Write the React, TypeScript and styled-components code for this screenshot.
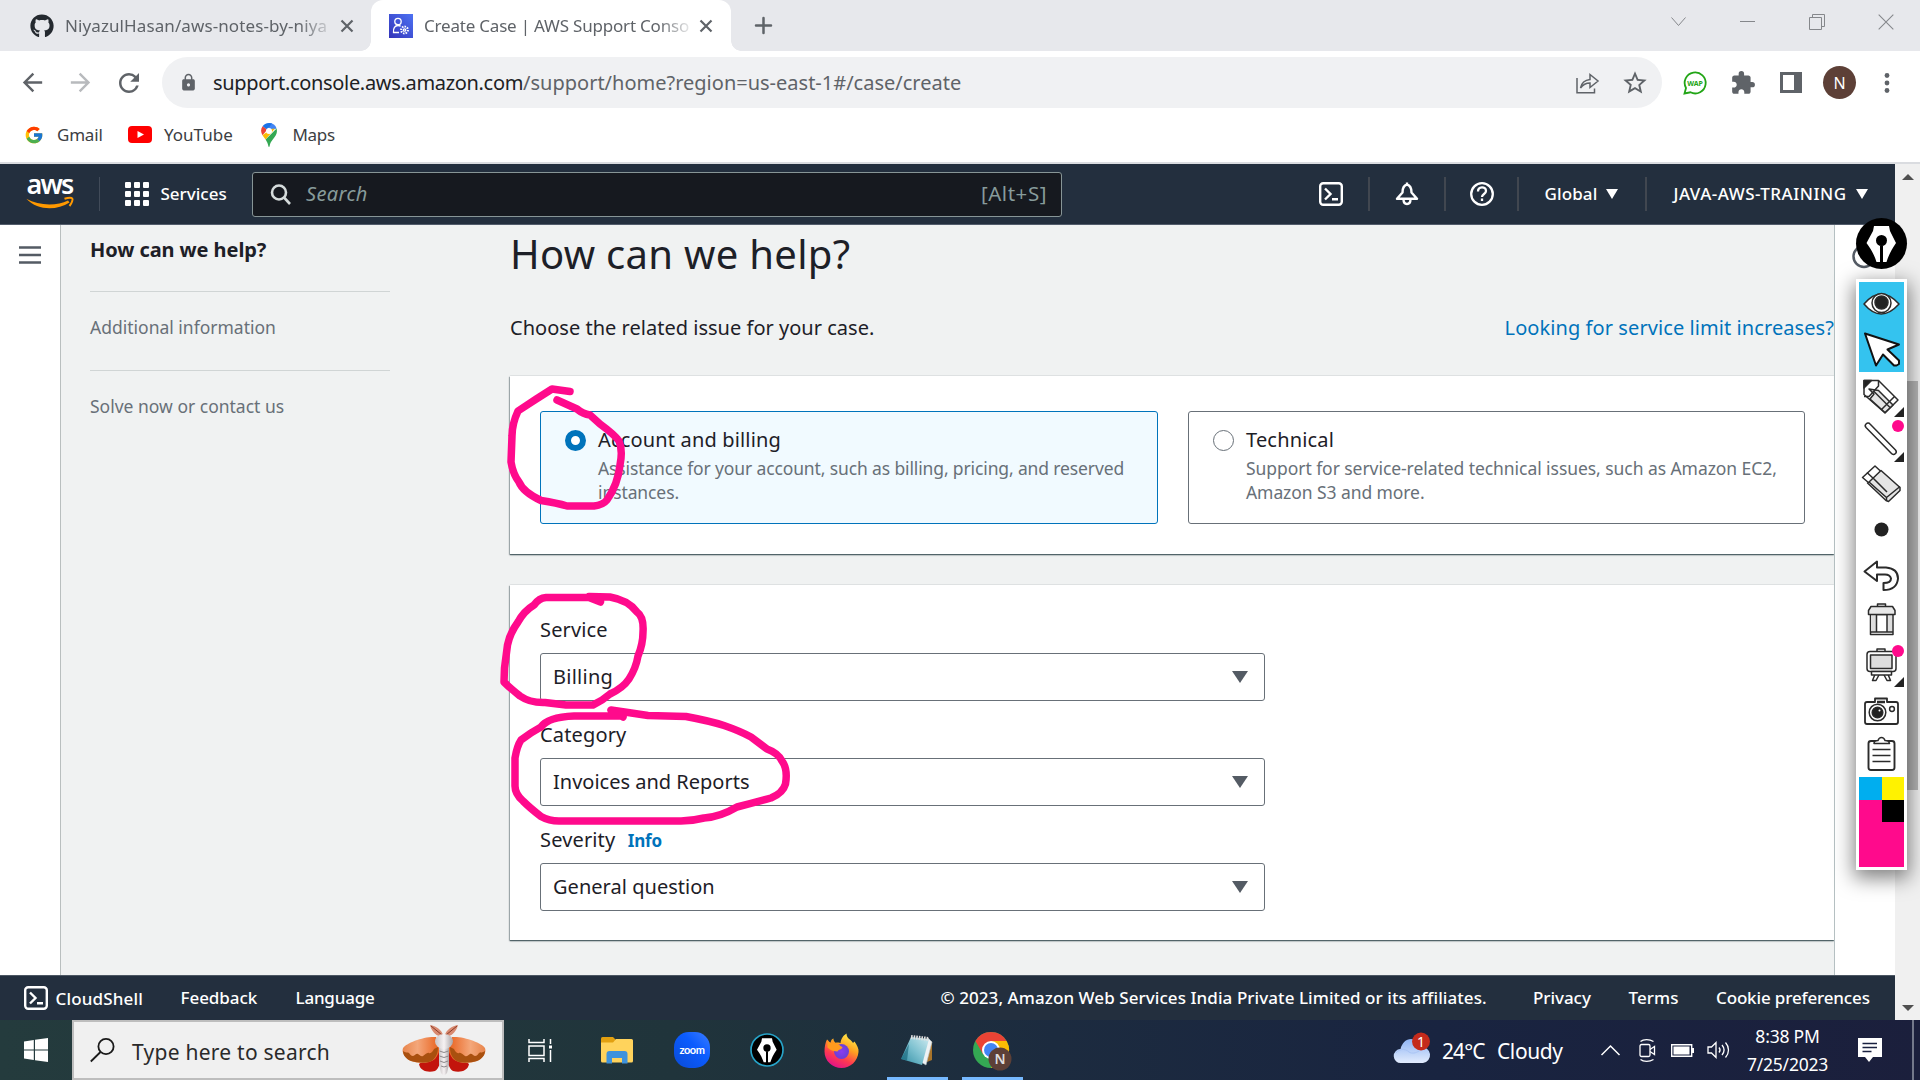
import React from 'react';
import styled, { createGlobalStyle, css } from 'styled-components';
import { FaGithub } from 'react-icons/fa';
import { FcGoogle } from 'react-icons/fc';
import { MdExtension, MdRefresh, MdLock, MdStarBorder, MdArrowBack, MdArrowForward } from 'react-icons/md';

const GlobalStyle = createGlobalStyle`
  *, *::before, *::after { box-sizing: border-box; }
  body { margin: 0; overflow: hidden; font-family: "Noto Sans", "Open Sans", sans-serif; }
  svg { display: block; flex: none; overflow: visible; }
`;

const PINK = '#ff0a8c';

const Screen = styled.div`
  position: relative;
  display: flex;
  flex-direction: column;
  width: 1920px;
  height: 1080px;
  overflow: hidden;
  background: #fff;
`;

const Text = styled.span<{ $size?: number; $ls?: number; $color?: string; $weight?: number; $italic?: boolean }>`
  display: block;
  white-space: nowrap;
  font-size: ${(p) => p.$size ?? 17}px;
  letter-spacing: ${(p) => p.$ls ?? 0}px;
  font-weight: ${(p) => p.$weight ?? 400};
  font-style: ${(p) => (p.$italic ? 'italic' : 'normal')};
  color: ${(p) => p.$color ?? 'inherit'};
`;

/* ---------- browser tabs ---------- */

const TabStrip = styled.div`
  display: flex;
  height: 51px;
  background: #e7e8ec;
  color: #5f6368;
`;

const Tab = styled.div<{ $active?: boolean }>`
  position: relative;
  display: flex;
  align-items: center;
  width: ${(p) => (p.$active ? 360 : 371)}px;
  padding-left: ${(p) => (p.$active ? 18 : 30)}px;
  border-radius: 12px 12px 0 0;
  ${(p) =>
    p.$active &&
    css`
      background: #fff;
      &::before,
      &::after {
        content: '';
        position: absolute;
        bottom: 0;
        width: 10px;
        height: 10px;
      }
      &::before {
        left: -10px;
        background: radial-gradient(circle at 0 0, transparent 9.5px, #fff 10px);
      }
      &::after {
        right: -10px;
        background: radial-gradient(circle at 100% 0, transparent 9.5px, #fff 10px);
      }
    `}
`;

const TabTitle = styled.div`
  width: 268px;
  margin: 0 8px 0 11px;
  line-height: 30px;
  mask-image: linear-gradient(90deg, #000 87%, transparent 101%);
`;

const NewTab = styled.div`
  display: flex;
  align-items: center;
  margin-left: 24px;
`;

const WindowControls = styled.div`
  display: grid;
  grid-template-columns: 69px 69px 69px 69px;
  align-items: center;
  justify-items: center;
  height: 43px;
  margin-left: auto;
  width: 276px;
  color: #85878b;
`;

/* ---------- toolbar ---------- */

const Toolbar = styled.div`
  display: flex;
  align-items: center;
  height: 63px;
  color: #5f6368;
`;

const NavButtons = styled.div`
  display: grid;
  grid-template-columns: 48px 48px 48px;
  justify-items: center;
  width: 162px;
  padding-left: 8.5px;
`;

const Omnibox = styled.div`
  display: flex;
  align-items: center;
  width: 1500px;
  height: 51px;
  padding: 0 13px 0 17px;
  border-radius: 26px;
  background: #f0f1f3;
`;

const Url = styled.div`
  display: flex;
  flex: 1;
  margin-left: 15px;
`;

const OmniActions = styled.div`
  display: flex;
  align-items: center;
  gap: 22px;
`;

const Extensions = styled.div`
  display: grid;
  grid-template-columns: 48px 48px 48px 49px 46px;
  align-items: center;
  justify-items: center;
  padding-left: 9px;
`;

const Avatar = styled.div`
  display: flex;
  align-items: center;
  justify-content: center;
  width: 33px;
  height: 33px;
  border-radius: 50%;
  background: #5d4037;
  color: #fff;
`;

const Bookmarks = styled.div`
  display: grid;
  grid-template-columns: 33px 71px 36px 96.5px 32px 60px;
  align-items: center;
  height: 50px;
  padding: 0 0 7px 24px;
  border-bottom: 2px solid #dadce0;
  color: #3c4043;
`;

/* ---------- page ---------- */

const Viewport = styled.div`
  display: flex;
  height: 856px;
`;

const Page = styled.div`
  display: flex;
  flex-direction: column;
  width: 1895px;
`;

const ScrollTrack = styled.div`
  display: flex;
  flex-direction: column;
  align-items: center;
  width: 25px;
  background: #f0f0f0;
`;

const ScrollThumb = styled.div`
  width: 21px;
  height: 409px;
  margin-top: 201px;
  background: #b5b5b5;
`;

const ArrowUp = styled.div`
  margin-top: 10px;
  border: 6px solid transparent;
  border-top: 0;
  border-bottom: 6px solid #505050;
`;

const ArrowDown = styled.div`
  margin: auto 0 9px;
  border: 6px solid transparent;
  border-bottom: 0;
  border-top: 6px solid #505050;
`;

const AwsHeader = styled.header`
  display: flex;
  align-items: center;
  height: 61px;
  border-bottom: 1px solid #525c6b;
  background: #232f3e;
  color: #fff;
`;

const AwsLogo = styled.div`
  display: flex;
  flex-direction: column;
  align-items: center;
  width: 99px;
  height: 34px;
`;

const LogoWord = styled.span`
  height: 21px;
  font-size: 27px;
  font-weight: 600;
  line-height: 14px;
  letter-spacing: -1.8px;
`;

const Services = styled.div`
  display: flex;
  align-items: center;
  gap: 11.5px;
  width: 153px;
  height: 34px;
  padding-left: 25px;
  border-left: 1px solid #414b59;
`;

const HeaderText = styled(Text)`
  padding-bottom: 2px;
`;

const SearchBox = styled.div`
  display: flex;
  align-items: center;
  width: 810px;
  height: 45px;
  padding: 0 14px 0 17px;
  border: 1px solid #879596;
  border-radius: 3px;
  background: #16191f;
  color: #879b9b;
`;

const SearchHint = styled.div`
  flex: 1;
  padding-left: 15px;
`;

const HeaderTools = styled.div`
  display: grid;
  grid-template-columns: 76px 76px 73px 128px 248px;
  margin-left: auto;
`;

const HeaderTool = styled.div<{ $shift?: number }>`
  display: flex;
  align-items: center;
  justify-content: center;
  gap: 9px;
  height: 34px;
  padding-right: ${(p) => p.$shift ?? 0}px;
  &:not(:last-child) {
    border-right: 2px solid #414750;
  }
`;

const Caret = styled.span<{ $w: number; $h: number; $color: string }>`
  border: ${(p) => p.$w / 2}px solid transparent;
  border-top: ${(p) => p.$h}px solid ${(p) => p.$color};
  border-bottom: 0;
`;

const Body = styled.div`
  display: flex;
  flex: 1;
  background: #f0f2f2;
  color: #1d2027;
`;

const LeftRail = styled.div`
  width: 61px;
  padding: 21px 0 0 19px;
  border-right: 1px solid #b9bfbf;
  background: #fff;
`;

const RightRail = styled.div`
  width: 61px;
  padding: 21px 0 0 17px;
  border-left: 1px solid #b5c0c2;
  background: #fff;
`;

const Steps = styled.nav`
  width: 300px;
  margin: -10px 120px 0 29px;
`;

const Step = styled.div<{ $current?: boolean }>`
  margin-top: 20px;
  padding-bottom: ${(p) => (p.$current ? 26 : 28)}px;
  line-height: 30px;
  &:not(:last-child) {
    border-bottom: 1px solid #d0d5d5;
  }
`;

const Content = styled.main`
  width: 1324px;
  padding-top: 4px;
`;

const Title = styled.h1`
  margin: 0 0 34px;
  font-size: 40px;
  font-weight: 400;
  line-height: 50px;
  letter-spacing: 0.3px;
`;

const IntroRow = styled.div`
  display: flex;
  justify-content: space-between;
  height: 30px;
  margin-bottom: 33px;
  line-height: 30px;
`;

const Panel = styled.section<{ $h: number; $top: number }>`
  height: ${(p) => p.$h}px;
  padding: ${(p) => p.$top}px 29px 0 30px;
  margin-bottom: 31px;
  background: #fff;
  box-shadow: 0 1px 1px rgba(0, 28, 36, 0.45), -1px 1px 1px rgba(0, 28, 36, 0.22), 0 1px 2px rgba(0, 28, 36, 0.3), 0 -1px 0 rgba(0, 28, 36, 0.05);
  clip-path: inset(-1px 0 -5px -3px);
`;

const Cards = styled.div`
  display: grid;
  grid-template-columns: 618px 617px;
  gap: 30px;
`;

const Card = styled.div<{ $selected?: boolean }>`
  display: flex;
  gap: 12px;
  height: 113px;
  padding: 13px 20px 0 24px;
  border: 1px solid ${(p) => (p.$selected ? '#0073bb' : '#687078')};
  border-radius: 3px;
  background: ${(p) => (p.$selected ? '#f1faff' : '#fff')};
`;

const Radio = styled.span<{ $on?: boolean }>`
  flex: none;
  width: 21px;
  height: 21px;
  margin-top: 5px;
  border: ${(p) => (p.$on ? '6px solid #0073bb' : '1.5px solid #687078')};
  border-radius: 50%;
  background: #fff;
`;

const CardText = styled.div`
  display: flex;
  flex-direction: column;
  line-height: 24px;
`;

const CardLabel = styled(Text)`
  margin-bottom: 1px;
  line-height: 30px;
`;

const Field = styled.div`
  margin-bottom: 19px;
`;

const FieldLabel = styled.div`
  display: flex;
  gap: 12.5px;
  height: 30px;
  margin-bottom: 8px;
  line-height: 30px;
`;

const InfoLink = styled(Text)`
  line-height: 32px;
`;

const Select = styled.div`
  display: flex;
  align-items: center;
  justify-content: space-between;
  width: 725px;
  height: 48px;
  padding: 0 16px 0 12px;
  border: 1px solid #687078;
  border-radius: 3px;
`;

const SelectValue = styled(Text)`
  padding-bottom: 1.5px;
`;

const Footer = styled.footer`
  display: grid;
  grid-template-columns: 156.500px 115px 645px 592.5px 95.5px 87.500px 1fr;
  align-items: center;
  height: 45px;
  padding-left: 24px;
  border-top: 1px solid #4c5763;
  background: #232f3e;
  color: #fff;
`;

const FooterShell = styled.div`
  display: flex;
  align-items: center;
  gap: 7.5px;
`;

/* ---------- annotation layer ---------- */

const InkLayer = styled.svg`
  position: absolute;
  left: 0;
  top: 0;
  fill: none;
  stroke: ${PINK};
  stroke-width: 7.5;
  stroke-linecap: round;
  stroke-linejoin: round;
`;

const PenBadge = styled.div`
  position: absolute;
  left: 1856px;
  top: 218px;
`;

const PenPalette = styled.div`
  position: absolute;
  left: 1856px;
  top: 279px;
  width: 51px;
  padding: 3px;
  background: #fff;
  box-shadow: 0 6px 20px 2px rgba(0, 0, 0, 0.5);
`;

const Tool = styled.div<{ $active?: boolean; $more?: boolean }>`
  position: relative;
  display: flex;
  align-items: center;
  justify-content: center;
  height: 45px;
  background: ${(p) => (p.$active ? '#34c3ef' : '#fff')};
  & + & {
    box-shadow: ${(p) => (p.$active ? '0 -1px 0 #5acdf2' : 'none')};
  }
  ${(p) =>
    p.$more &&
    css`
      &::after {
        content: '';
        position: absolute;
        right: 0;
        bottom: 0;
        border-left: 10px solid transparent;
        border-bottom: 10px solid #222;
      }
    `}
`;

const InkDot = styled.span`
  position: absolute;
  right: 0;
  top: 3px;
  width: 12px;
  height: 12px;
  border-radius: 50%;
  background: ${PINK};
`;

const Swatches = styled.div`
  display: grid;
  grid-template-columns: 22.5px 22.5px;
  grid-template-rows: 23px 22px 45px;
  background: ${PINK};
`;

const Swatch = styled.span<{ $c: string }>`
  background: ${(p) => p.$c};
`;

/* ---------- taskbar ---------- */

const Taskbar = styled.div`
  display: flex;
  height: 60px;
  background: linear-gradient(90deg, #243b3d 0%, #20343b 35%, #1c2b3f 55%, #192440 75%, #1b1f3c 100%);
  color: #fff;
`;

const Start = styled.div`
  display: flex;
  align-items: center;
  justify-content: center;
  width: 72px;
`;

const TaskSearch = styled.div`
  display: flex;
  align-items: center;
  width: 432px;
  padding: 0 16px 0 16px;
  border: 2px solid #bdbdbd;
  background: #f0f0f0;
  color: #2a2a2a;
`;

const TaskSearchLabel = styled(Text)`
  flex: 1;
  padding: 4px 0 0 17px;
`;

const TaskApps = styled.div`
  display: grid;
  grid-template-columns: repeat(7, 75px);
`;

const TaskApp = styled.div<{ $running?: boolean }>`
  position: relative;
  display: flex;
  align-items: center;
  justify-content: center;
  &::after {
    content: '';
    position: absolute;
    left: 8px;
    right: 6px;
    bottom: 0;
    height: 3px;
    background: ${(p) => (p.$running ? '#76b9ff' : 'transparent')};
  }
`;

const Tray = styled.div`
  display: grid;
  grid-template-columns: 48px 55px 95px 36px 38px 33px 39px 99px 65px 10px;
  align-items: center;
  width: 526px;
  margin-left: auto;
`;

const TrayCell = styled.div`
  display: flex;
  justify-content: center;
`;

const TrayText = styled(Text)`
  padding-top: 2px;
`;

const Clock = styled.div`
  display: flex;
  flex-direction: column;
  align-items: center;
  padding-bottom: 1px;
  line-height: 28px;
`;

const DesktopEdge = styled.div`
  align-self: stretch;
  width: 2px;
  margin-left: 10px;
  background: #73788a;
`;

/* ---------- drawings ---------- */

const Cross = ({ size, w }: { size: number; w: number }) => (
  <svg width={size} height={size} viewBox="0 0 12 12" fill="none" stroke="currentColor" strokeWidth={w}>
    <path d="M.5 .5 11.5 11.5M11.5 .5 .5 11.5" />
  </svg>
);

const ShellIcon = () => (
  <svg width="24" height="24" viewBox="0 0 24 24" fill="none" stroke="#fff" strokeWidth="2.4">
    <rect x="1.2" y="1.2" width="21.6" height="21.6" rx="3" />
    <path d="M6 6.5 11.5 12 6 17.5M13 17.3h6" />
  </svg>
);

const Nib = ({ size, ring }: { size: number; ring?: string }) => (
  <svg width={size} height={size} viewBox="0 0 51 51">
    <circle cx="25.5" cy="25.5" r={ring ? 24 : 25.5} fill="#000" stroke={ring ?? 'none'} strokeWidth="2.5" />
    <path d="M18 8h15l1 5 6 12C35 32 32 39 30.5 44H27V27.500h-3V44h-3.500C19 39 16 32 10.500 25L17 13z" fill="#fff" />
    <circle cx="25.500" cy="22.500" r="5.500" fill="#000" />
  </svg>
);

const MapsPin = () => (
  <svg width="16" height="24" viewBox="0 0 16 24">
    <path d="M8 0a8 8 0 0 1 7.600 5.500L8 8z" fill="#4285f4" />
    <path d="M8 0C5 0 2.800 1.300 1.600 3.300L6 7 11 .6A9 9 0 0 0 8 0z" fill="#1a73e8" />
    <path d="M1.600 3.300C-.6 6.300-.2 9.300 1.500 12.200L6.200 6.800z" fill="#ea4335" />
    <path d="M1.500 12.200C2.500 13.800 3.600 15 4.600 16.500L14 5.500 10 6z" fill="#fbbc04" />
    <path d="M4.600 16.500C6 18.700 7 21 7.400 23.300c.2 1 1 1 1.200 0 .8-5.300 4.200-7.300 6.200-11 1.300-2.300 1.400-4.600.8-6.800z" fill="#34a853" />
    <circle cx="8" cy="8" r="3" fill="#fff" />
  </svg>
);

const Moth = () => (
  <svg width="84" height="52" viewBox="0 0 84 52">
    <defs>
      <linearGradient id="wingL" x1="0" x2="1"><stop offset="0" stopColor="#e8854c" /><stop offset=".4" stopColor="#f4a77a" /><stop offset="1" stopColor="#e8601c" /></linearGradient>
      <linearGradient id="wingR" x1="1" x2="0"><stop offset="0" stopColor="#e8854c" /><stop offset=".4" stopColor="#f4a77a" /><stop offset="1" stopColor="#e8601c" /></linearGradient>
      <linearGradient id="fur" x1="0" x2="1"><stop offset="0" stopColor="#c9c4c6" /><stop offset=".5" stopColor="#f6f2f3" /><stop offset="1" stopColor="#aaa5a7" /></linearGradient>
    </defs>
    <path d="M38 24 17 40c1 7 9 9 16 7 4-2 6-10 7-20zM46 24l21 16c-1 7-9 9-16 7-4-2-6-10-7-20z" fill="#c3140c" />
    <path d="M34 13C22 12 4 19 1 24c-2 5 3 11 8 13 8 3 18 3 24-2 3-4 5-8 5-13z" fill="url(#wingL)" />
    <path d="M50 13c12-1 30 6 33 11 2 5-3 11-8 13-8 3-18 3-24-2-3-4-5-8-5-13z" fill="url(#wingR)" />
    <path d="M1 27c2 2 5 1 6 2s2 3 4 3 3-3 5-2 3 3 5 2 4-4 6-3 4-2 5-4l4-2c0 5-1 9-5 13-5 4-15 3-22 1-5-2-8-6-8-10zM83 27c-2 2-5 1-6 2s-2 3-4 3-3-3-5-2-3 3-5 2-4-4-6-3-4-2-5-4l-4-2c0 5 1 9 5 13 5 4 15 3 22 1 5-2 8-6 8-10z" fill="#a9500f" />
    <path d="M39 12C34 13 29 6 28 1c6 1 12 5 13 10zM45 12c5 1 10-6 11-11-6 1-12 5-13 10z" fill="#d98a70" />
    <path d="M40 11 29 2M44 11 55 2" stroke="#8a3b28" strokeWidth="1" />
    <path d="M37 22h10v18l-2 9q-3 4-6 0l-2-9z" fill="url(#fur)" />
    <path d="M37.500 27q4.500 3 9 0M37.500 32q4.500 3 9 0M38 37q4 3 8 0M39 42q3 2 6 0" fill="none" stroke="#8d898b" strokeWidth="1" />
    <ellipse cx="42" cy="17.500" rx="9" ry="7.500" fill="url(#fur)" />
  </svg>
);

const Firefox = () => (
  <svg width="35" height="35" viewBox="0 0 35 35">
    <defs>
      <linearGradient id="fx" x1=".8" y1="0" x2=".3" y2="1"><stop offset="0" stopColor="#fff44f" /><stop offset=".4" stopColor="#ffa020" /><stop offset=".7" stopColor="#ff3a50" /><stop offset="1" stopColor="#e0108c" /></linearGradient>
      <radialGradient id="fxg"><stop offset="0" stopColor="#8a3cf0" /><stop offset="1" stopColor="#6a3fd6" /></radialGradient>
    </defs>
    <path d="M3 6.500c1 0 2 2.500 3.500 3.500C7 7 8 6 9.500 5.500c-.2 2 1 3.500 2 4.200 3-.4 4 0 5 .4C17 5 20 2 22.500.5c0 3 1.500 5 4 6.500 1 .8 2 2 2.500 3l1.500-1.500C33 12 35 16 34.500 19c-.7 9-8 16-17 16S.5 28 .5 18.500C.5 14 1.500 9 3 6.500z" fill="url(#fx)" />
    <circle cx="17.500" cy="18.500" r="7.500" fill="url(#fxg)" />
    <path d="M3.500 8C7 11 11 8.500 15.500 12c1 1.800 3 1.600 3 2.500-1 2.500-4 1.500-5 4-3 0-7-1-10-4z" fill="#ff9a1e" />
  </svg>
);

const Chrome = () => (
  <svg width="38" height="37" viewBox="0 0 38 37">
    <circle cx="18" cy="18" r="18" fill="#34a853" />
    <path d="M2.400 9A18 18 0 0 1 33.600 9H18l-7.800 13.500z" fill="#ea4335" />
    <path d="M18 9h15.600A18 18 0 0 1 18 36l7.800-13.500z" fill="#fbbc04" />
    <circle cx="18" cy="18" r="9" fill="#fff" />
    <circle cx="18" cy="18" r="7" fill="#4285f4" />
    <circle cx="27" cy="27" r="11.500" fill="#5d4037" />
    <text x="27" y="32" textAnchor="middle" fontSize="14" fontFamily="Noto Sans, sans-serif" fontWeight="600" fill="#ddd">N</text>
  </svg>
);

const Notepad = () => (
  <svg width="33" height="33" viewBox="0 0 33 33">
    <defs><linearGradient id="np" x1="1" y1="0" x2="0" y2="1"><stop offset="0" stopColor="#cdeaf0" /><stop offset=".5" stopColor="#7cc0cf" /><stop offset="1" stopColor="#2f8da3" /></linearGradient></defs>
    <path d="m29 6 3 2v18l-5 2z" fill="#a8742a" />
    <path d="M28 4 32 8 26 31 21 28z" fill="#eef2f3" stroke="#b8c2c6" strokeWidth=".6" />
    <path d="M11 3 29 5 22 31 1 25z" fill="url(#np)" />
    <path d="M1 25 9 10 7 26.500z" fill="#146277" opacity=".6" />
    <path d="M11 3 29 5" stroke="#e0e0e0" strokeWidth="4" strokeDasharray="1.600 1" />
  </svg>
);

const ToolSvg = ({ children }: { children: React.ReactNode }) => (
  <svg width="45" height="45" viewBox="0 0 45 45" fill="#fff" stroke="#2b2b2b" strokeWidth="1.500" strokeLinejoin="round">{children}</svg>
);

const CardOption = ({ on, label, ls, lines }: { on?: boolean; label: string; ls: number; lines: [string, number][] }) => (
  <Card $selected={on}>
    <Radio $on={on} />
    <CardText>
      <CardLabel $size={20} $ls={ls}>{label}</CardLabel>
      {lines.map(([line, s]) => (
        <Text key={line} $size={17.5} $ls={s} $color="#687078">{line}</Text>
      ))}
    </CardText>
  </Card>
);

const SelectField = ({ label, value, info, ls = 0 }: { label: string; value: string; info?: boolean; ls?: number }) => (
  <Field>
    <FieldLabel>
      <Text $size={20} $ls={0.15}>{label}</Text>
      {info && <InfoLink $size={17} $weight={700} $ls={-0.2} $color="#0073bb">Info</InfoLink>}
    </FieldLabel>
    <Select>
      <SelectValue $size={20} $ls={ls}>{value}</SelectValue>
      <Caret $w={16} $h={12} $color="#545b64" />
    </Select>
  </Field>
);

export default function App() {
  return (
    <Screen>
      <GlobalStyle />
      <TabStrip>
        <Tab>
          <FaGithub size={24} color="#24292f" />
          <TabTitle><Text $ls={0.1}>NiyazulHasan/aws-notes-by-niya</Text></TabTitle>
          <Cross size={12} w={2.2} />
        </Tab>
        <Tab $active>
          <svg width="24" height="24" viewBox="0 0 24 24" fill="none" stroke="#fff" strokeWidth="1.300">
            <defs><linearGradient id="fav" x1="0" y1="1" x2="1" y2="0"><stop offset="0" stopColor="#3334b9" /><stop offset="1" stopColor="#4d72f3" /></linearGradient></defs>
            <rect width="24" height="24" fill="url(#fav)" stroke="none" />
            <circle cx="9" cy="7.500" r="3.200" />
            <path d="M10 18.500H4.500C4 14 6 11.500 9 11.500c1 0 2 .3 2.700.8" />
            <circle cx="15.500" cy="16" r="1.200" />
            <circle cx="15.500" cy="16" r="3.400" strokeWidth="2" strokeDasharray="1.500 1.100" />
          </svg>
          <TabTitle><Text $ls={-0.2}>Create Case | AWS Support Conso</Text></TabTitle>
          <Cross size={12} w={2.2} />
        </Tab>
        <NewTab>
          <svg width="17" height="17" viewBox="0 0 17 17" stroke="currentColor" strokeWidth="2.500" strokeLinecap="round"><path d="M8.500 1v15M1 8.500h15" /></svg>
        </NewTab>
        <WindowControls>
          <svg width="15" height="9" viewBox="0 0 15 9" fill="none" stroke="currentColor"><path d="M.5.5l7 8 7-8" /></svg>
          <svg width="15" height="2" viewBox="0 0 15 2" stroke="currentColor"><path d="M0 .5h15" /></svg>
          <svg width="16" height="16" viewBox="0 0 16 16" fill="none" stroke="currentColor"><path d="M.5 3.500h12v12H.5zM3.500 3.500v-3h12v12h-3" /></svg>
          <Cross size={16} w={0.8} />
        </WindowControls>
      </TabStrip>

      <Toolbar>
        <NavButtons>
          <MdArrowBack size={29} />
          <MdArrowForward size={29} color="#b8babd" />
          <MdRefresh size={30} />
        </NavButtons>
        <Omnibox>
          <MdLock size={19} />
          <Url>
            <Text $size={20} $ls={-0.32} $color="#202124">support.console.aws.amazon.com</Text>
            <Text $size={20} $color="#5f6368">/support/home?region=us-east-1#/case/create</Text>
          </Url>
          <OmniActions>
            <svg width="23" height="22" viewBox="0 0 23 22" fill="none" stroke="currentColor" strokeWidth="1.500">
              <path d="M1 6v14.800h17.500V16.500M4.500 16c1-5 4.500-8 9.500-8.500V2.500L22 9l-8 6.500V11c-4 0-7 1.500-9.500 5z" />
            </svg>
            <MdStarBorder size={28} />
          </OmniActions>
        </Omnibox>
        <Extensions>
          <svg width="24" height="24" viewBox="0 0 24 24" fill="none" stroke="#22a516" strokeWidth="1.800">
            <path d="M1.500 22.500 3 17A10.500 10.500 0 1 1 7.500 21.300z" />
            <text x="12" y="14.500" textAnchor="middle" fontSize="7" fontWeight="700" fontFamily="Noto Sans, sans-serif" fill="#22a516" stroke="none">WAP</text>
          </svg>
          <MdExtension size={26} />
          <svg width="22" height="21" viewBox="0 0 22 21"><path d="M0 0h22v21H0z" fill="#5f6368" /><path d="M3 3h11v15H3z" fill="#fff" /></svg>
          <Avatar><Text $size={16}>N</Text></Avatar>
          <svg width="6" height="20" viewBox="0 0 6 20" fill="currentColor"><circle cx="3" cy="2.500" r="2.400" /><circle cx="3" cy="10" r="2.400" /><circle cx="3" cy="17.500" r="2.400" /></svg>
        </Extensions>
      </Toolbar>

      <Bookmarks>
        <FcGoogle size={20} />
        <Text $ls={-0.2}>Gmail</Text>
        <svg width="24" height="17" viewBox="0 0 24 17"><rect width="24" height="17" rx="4" fill="#f00" /><path d="m9.500 5 6.500 3.500L9.500 12z" fill="#fff" /></svg>
        <Text>YouTube</Text>
        <MapsPin />
        <Text $ls={-0.3}>Maps</Text>
      </Bookmarks>

      <Viewport>
        <Page>
          <AwsHeader>
            <AwsLogo>
              <LogoWord>aws</LogoWord>
              <svg width="48" height="11" viewBox="0 0 48 11" fill="none" stroke="#f90">
                <path d="M.3.800C13 8 31 8 42 2.500l1.500 2C31 12.500 12 13 .3.800z" fill="#f90" stroke="none" />
                <path d="M38.500.800c4-1.300 7-1.300 7.800-.3.700 1-.3 4.500-2.800 7.500" strokeWidth="2" />
              </svg>
            </AwsLogo>
            <Services>
              <svg width="24" height="24" viewBox="0 0 24 24" fill="#fff">
                {[0, 9, 18].map((y) => [0, 9, 18].map((x) => <rect key={`${x}-${y}`} x={x} y={y} width="6" height="6" rx="1" />))}
              </svg>
              <HeaderText $weight={500}>Services</HeaderText>
            </Services>
            <SearchBox>
              <svg width="21" height="21" viewBox="0 0 21 21" fill="none" stroke="#d5dbdb" strokeWidth="2.600"><circle cx="9" cy="8.500" r="7" /><path d="m14 13.500 6 6.500" /></svg>
              <SearchHint><HeaderText $size={20} $ls={0.35} $italic>Search</HeaderText></SearchHint>
              <HeaderText $size={20.5} $ls={0.55}>[Alt+S]</HeaderText>
            </SearchBox>
            <HeaderTools>
              <HeaderTool><ShellIcon /></HeaderTool>
              <HeaderTool>
                <svg width="24" height="24" viewBox="0 0 24 24" fill="none" stroke="#fff" strokeWidth="2.400" strokeLinejoin="round">
                  <path d="M12 2.500c-3.500 1-4.500 4-4.500 8L2 16.800h20l-5.500-6.300c0-4-1-7-4.500-8zM12 .5v2M8.500 17c0 3.500 1.500 5 3.500 5s3.500-1.500 3.500-5" />
                </svg>
              </HeaderTool>
              <HeaderTool>
                <svg width="24" height="24" viewBox="0 0 24 24" fill="none" stroke="#fff" strokeWidth="2.300">
                  <circle cx="12" cy="12" r="10.800" /><path d="M8 9.500c0-5.500 8-5.500 8-.5 0 3-4 3-4 6M12 16.500v2.500" />
                </svg>
              </HeaderTool>
              <HeaderTool $shift={1}><HeaderText $weight={500} $ls={0.1}>Global</HeaderText><Caret $w={13} $h={10} $color="#fff" /></HeaderTool>
              <HeaderTool $shift={1}><HeaderText $weight={500} $ls={0.5}>JAVA-AWS-TRAINING</HeaderText><Caret $w={13} $h={10} $color="#fff" /></HeaderTool>
            </HeaderTools>
          </AwsHeader>

          <Body>
            <LeftRail>
              <svg width="22" height="18" viewBox="0 0 22 18" stroke="#545b64" strokeWidth="2.600"><path d="M0 1.500h22M0 9h22M0 16.500h22" /></svg>
            </LeftRail>
            <Steps>
              <Step $current><Text $size={20} $weight={700} $ls={-0.08}>How can we help?</Text></Step>
              <Step><Text $size={17.5} $color="#687078">Additional information</Text></Step>
              <Step><Text $size={17.5} $color="#687078">Solve now or contact us</Text></Step>
            </Steps>
            <Content>
              <Title>How can we help?</Title>
              <IntroRow>
                <Text $size={20} $ls={0.02}>Choose the related issue for your case.</Text>
                <Text $size={20} $ls={0.08} $color="#0073bb">Looking for service limit increases?</Text>
              </IntroRow>
              <Panel $h={178} $top={35}>
                <Cards>
                  <CardOption on label="Account and billing" ls={0.16} lines={[['Assistance for your account, such as billing, pricing, and reserved', -0.13], ['instances.', -0.1]]} />
                  <CardOption label="Technical" ls={0.18} lines={[['Support for service-related technical issues, such as Amazon EC2,', -0.06], ['Amazon S3 and more.', -0.08]]} />
                </Cards>
              </Panel>
              <Panel $h={355} $top={30}>
                <SelectField label="Service" value="Billing" ls={0.25} />
                <SelectField label="Category" value="Invoices and Reports" />
                <SelectField label="Severity" value="General question" ls={0.03} info />
              </Panel>
            </Content>
            <RightRail>
              <svg width="24" height="24" viewBox="0 0 24 24" fill="none" stroke="#545b64" strokeWidth="2.500"><circle cx="12" cy="10.500" r="10.500" /></svg>
            </RightRail>
          </Body>

          <Footer>
            <FooterShell><ShellIcon /><Text $weight={500} $ls={0.15}>CloudShell</Text></FooterShell>
            <HeaderText $weight={500} $ls={-0.05}>Feedback</HeaderText>
            <HeaderText $weight={500} $ls={-0.2}>Language</HeaderText>
            <HeaderText $weight={500} $ls={0.07}>© 2023, Amazon Web Services India Private Limited or its affiliates.</HeaderText>
            <HeaderText $weight={500} $ls={-0.05}>Privacy</HeaderText>
            <HeaderText $weight={500} $ls={0.1}>Terms</HeaderText>
            <HeaderText $weight={500} $ls={-0.15}>Cookie preferences</HeaderText>
          </Footer>
        </Page>
        <ScrollTrack>
          <ArrowUp />
          <ScrollThumb />
          <ArrowDown />
        </ScrollTrack>
      </Viewport>

      <Taskbar>
        <Start>
          <svg width="24" height="24" viewBox="0 0 24 24" fill="#fff"><path d="M0 3.400 9.800 2v9.400H0zM11 1.800 24 0v11.400H11zM0 12.600h9.800V22L0 20.600zM11 12.600h13V24l-13-1.800z" /></svg>
        </Start>
        <TaskSearch>
          <svg width="25" height="24" viewBox="0 0 25 24" fill="none" stroke="#1a1a1a" strokeWidth="1.800"><circle cx="16" cy="8.500" r="7.600" /><path d="M10.500 14 .8 23.500" /></svg>
          <TaskSearchLabel $size={21} $ls={0.25}>Type here to search</TaskSearchLabel>
          <Moth />
        </TaskSearch>
        <TaskApps>
          <TaskApp>
            <svg width="27" height="23" viewBox="0 0 27 23" fill="none" stroke="#fff" strokeWidth="1.500"><path d="M1 0v3.500h15V0M1 7h15v9.500H1zM1 23v-3.500h15V23M22.500 0v5M22.500 11v12" /><path d="M21 6.500h3v3h-3z" fill="#fff" stroke="none" /></svg>
          </TaskApp>
          <TaskApp>
            <svg width="32" height="27" viewBox="0 0 32 27"><path d="M0 1.500Q0 0 1.500 0H12l3 3v5H0z" fill="#e2a010" /><path d="M0 5.500h12L15 2h15.500Q32 2 32 3.500V24q0 1.500-1.500 1.500h-29Q0 25.500 0 24z" fill="#ffd35c" /><path d="M5.500 26.500V17q0-3 3-3h15q3 0 3 3v9.500H21V21H11v5.500z" fill="#3e92dc" /></svg>
          </TaskApp>
          <TaskApp>
            <svg width="36" height="36" viewBox="0 0 36 36">
              <defs><linearGradient id="zm" x1="1" y1="0" x2="0" y2="1"><stop offset="0" stopColor="#3d7dff" /><stop offset=".4" stopColor="#0b5cff" /><stop offset="1" stopColor="#0a4bd6" /></linearGradient></defs>
              <rect width="36" height="36" rx="15" fill="url(#zm)" />
              <text x="18" y="21.500" textAnchor="middle" fontSize="11" fontWeight="700" fontFamily="Lato, sans-serif" fill="#fff" letterSpacing="-.4">zoom</text>
            </svg>
          </TaskApp>
          <TaskApp><Nib size={34} ring="#27a3c8" /></TaskApp>
          <TaskApp><Firefox /></TaskApp>
          <TaskApp $running><Notepad /></TaskApp>
          <TaskApp $running><Chrome /></TaskApp>
        </TaskApps>
        <Tray>
          <svg width="37" height="30" viewBox="0 0 37 30">
            <defs><linearGradient id="cl" x1="0" y1="0" x2="0" y2="1"><stop offset="0" stopColor="#8fb4f4" /><stop offset="1" stopColor="#e2ecfd" /></linearGradient></defs>
            <path d="M7 28a7 7 0 0 1-.5-14C8 8 12 4 17 4s9 3.500 10 8a7.800 7.800 0 0 1 2 16z" fill="url(#cl)" />
            <path d="M2 18c3-4 9-5 13-1 3 2 7 1 10-1" fill="none" stroke="#a9c4f5" />
            <circle cx="27" cy="6.500" r="9" fill="#c42b1c" />
            <text x="27" y="11.500" textAnchor="middle" fontSize="14" fontFamily="Noto Sans, sans-serif" fill="#fff">1</text>
          </svg>
          <TrayText $size={21} $ls={-0.9}>24°C</TrayText>
          <TrayText $size={21} $ls={-0.4}>Cloudy</TrayText>
          <TrayCell><svg width="19" height="11" viewBox="0 0 19 11" fill="none" stroke="#fff" strokeWidth="1.500"><path d="m.5 10 9-9 9 9" /></svg></TrayCell>
          <TrayCell>
            <svg width="17" height="23" viewBox="0 0 17 23" fill="none" stroke="#fff" strokeWidth="1.300"><rect x="1" y="5.500" width="10" height="12" rx="1.500" /><path d="m11 10.500 4.500-3v8L11 12.500M1.500 2.500c3-2.500 9-2.500 13 0M1.500 20.500c3 2.500 9 2.500 13 0" /></svg>
          </TrayCell>
          <TrayCell><svg width="23" height="13" viewBox="0 0 23 13"><path d="M.7.700h20v11.600H.7z" fill="none" stroke="#fff" strokeWidth="1.400" /><path d="M2.500 2.500h16v8h-16zM21 4h2v5h-2z" fill="#fff" /></svg></TrayCell>
          <TrayCell><svg width="23" height="18" viewBox="0 0 23 18" fill="none" stroke="#fff" strokeWidth="1.300"><path d="M1 6h3.500L9 1.500v15L4.500 12H1zM12 6.500c1.300 1.500 1.300 3.500 0 5M15 4c2.500 3 2.500 7 0 10M18.500 1.500c4 4.500 4 10.500 0 15" /></svg></TrayCell>
          <Clock>
            <Text $size={17.5} $ls={-0.2}>8:38 PM</Text>
            <Text $size={17.5} $ls={-0.25}>7/25/2023</Text>
          </Clock>
          <TrayCell>
            <svg width="24" height="24" viewBox="0 0 24 24"><path d="M0 0h24v19H15l-4 5-4-5H0z" fill="#fff" /><path d="M4.500 5.500h14.500M4.500 9.500h14.500M4.500 13.500h9" stroke="#1a2140" strokeWidth="1.300" /></svg>
          </TrayCell>
          <DesktopEdge />
        </Tray>
      </Taskbar>

      <InkLayer width="1920" height="1080" viewBox="0 0 1920 1080">
        <path d="M570 391.500 552 389 Q536 399 518 411 Q512 424 512 436 L511 462 Q513 474 519 482 Q523 492 541 500.500 Q557 503 567 506 H594 Q603 505 607 500 Q618 484 620 465 Q623 450 619 441 Q615 435 600 424 L590 415 Q583 414 577 409 L557 400" />
        <path d="M600.500 602 589 597.500 H546 Q539 598 534 605 Q524 611 518 622 Q510 633 507.500 645 L504.500 668 504 682 Q510 688 520 696 Q530 703 545 702.500 L566 705 H593 Q602 701 610 694 Q623 688 629 679 Q636 668 638 656 Q643 644 643 632 Q644 617 637 612 Q628 600 610 597 L589 596.500" />
        <path d="M623 717 611 710 628 712.500 648 715.500 686 716.500 Q710 721 724 725.500 Q740 731 751 737 L767 749 Q778 753 782 761 Q788 769 785.500 784 Q783 793 771 798 Q753 803 737 807 Q720 817 704 818 Q692 821 681 821 H559 Q549 821 541 816.500 Q530 808 523 801 Q515 794 515 786 V758 Q517 746 521 740 Q530 733 541 727 Q548 717 574 716 H623" />
      </InkLayer>

      <PenPalette>
        <Tool $active>
          <ToolSvg>
            <path d="M5 22Q22 2 40 22 22 42 5 22z" />
            <circle cx="22.500" cy="21" r="9.500" />
            <circle cx="22.500" cy="20.500" r="6.500" fill="#222" />
          </ToolSvg>
        </Tool>
        <Tool $active>
          <ToolSvg><path d="M6 6.500 40 17.500 28.500 22.500 40 33.500V37L37.500 38.500H35L24 27.500 17 38.500z" stroke="#111" strokeWidth="2" /></ToolSvg>
        </Tool>
        <Tool $more>
          <ToolSvg>
            <path d="M5 8.500H19.500L39 28 26 41 5 22.500z" />
            <path d="M10 17 15 22 11 27 26 40.500 34 33 19.500 18.500z" fill="#e5e5e5" />
            <path d="M19.500 8.500V14L10 24.500H5M15 19.500 31 35.500M35.500 24.500 22.500 37.500" fill="none" />
            <path d="M5 8.500H12.500L5 16z" fill="#222" />
          </ToolSvg>
        </Tool>
        <Tool $more>
          <ToolSvg><path d="M7 10.500a2.500 2.500 0 0 1 4-3.500L36.500 33a2.500 2.500 0 0 1-4 3.500z" /></ToolSvg>
          <InkDot />
        </Tool>
        <Tool>
          <ToolSvg>
            <path d="M3.500 15.500 16 4 22.500 10 10 21z" />
            <path d="M10 20 22 8.500 41 25.500V28.500L29.500 39.500 27 38.500 8.500 21z" fill="#e5e5e5" />
            <path d="M8 10.500 15 17 28 30M27.500 38.500V35.500L41 24.500M10 20 27.500 35.500" fill="none" />
          </ToolSvg>
        </Tool>
        <Tool><ToolSvg><circle cx="22.500" cy="22.500" r="7" fill="#222" stroke="none" /></ToolSvg></Tool>
        <Tool>
          <ToolSvg><path d="M5.500 19.500 18 9.500V15.500H27Q39 16.500 39 26.500 38 38 24.500 38V31Q32 31 32 26.500 31 22.500 26 22.500H18V29z" strokeWidth="2" /></ToolSvg>
        </Tool>
        <Tool>
          <ToolSvg>
            <path d="M11.500 17.500H34V37.500H11.500z" />
            <path d="M12 18h5v17h-5zM28 18h5v17h-5z" fill="#ddd" stroke="none" />
            <path d="M9.500 17.500V13.500L12 9.500H33.500L36 13.500V17.500zM18.500 9.500V7H26.500V9.500" fill="#e8e8e8" />
            <path d="M17.500 18V35M28 18V35M11.500 35H34" fill="none" />
          </ToolSvg>
        </Tool>
        <Tool $more>
          <ToolSvg>
            <path d="M16.500 31 13.500 38.500H17L21 31zM24 31 28 38.500H31.500L28.500 31zM18 9.500V7H26V9.500" />
            <rect x="8" y="9.500" width="29" height="20" rx="3" />
            <path d="M12.500 29.500H32.500V33H12.500z" />
            <path d="M11.500 13H33V26.500H11.500z" fill="#ddd" />
          </ToolSvg>
          <InkDot />
        </Tool>
        <Tool>
          <ToolSvg>
            <path d="M8 15H16V11.500H28V15H37Q39 15 39 17V35Q39 37 37 37H8Q6 37 6 35V17Q6 15 8 15z" strokeWidth="1.800" />
            <path d="M18 15h8" strokeWidth="2.500" />
            <circle cx="18.500" cy="25.500" r="8.300" /><circle cx="18.500" cy="25.500" r="5.300" fill="#222" /><circle cx="20.500" cy="23.500" r="1" stroke="none" /><circle cx="33" cy="22" r="2.400" />
          </ToolSvg>
        </Tool>
        <Tool>
          <ToolSvg>
            <rect x="9.500" y="9" width="26" height="29" rx="2.500" strokeWidth="1.900" />
            <path d="M15 11.500Q15 8.500 19 8.500 20 5.500 22.500 5.500 25 5.500 26 8.500 30 8.500 30.500 11.500z" />
            <path d="M13.500 17.500H31.500M13.500 23.500H31.500M13.500 29.500H31.500" />
          </ToolSvg>
        </Tool>
        <Swatches>
          <Swatch $c="#00aeef" />
          <Swatch $c="#fff200" />
          <Swatch $c={PINK} />
          <Swatch $c="#000" />
        </Swatches>
      </PenPalette>
      <PenBadge><Nib size={51} /></PenBadge>
    </Screen>
  );
}
